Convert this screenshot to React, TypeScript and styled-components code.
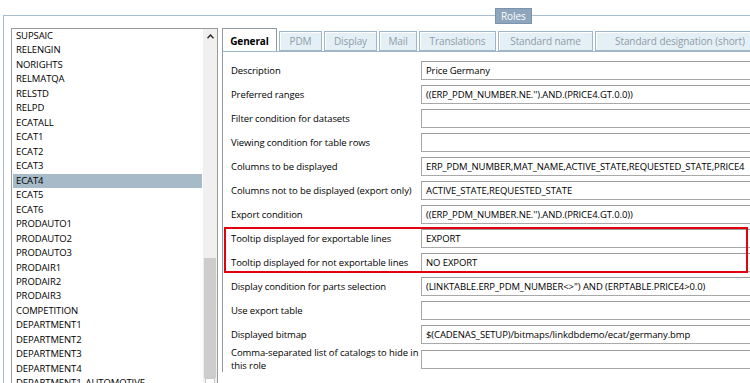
import { styled, createGlobalStyle } from 'styled-components';

const GlobalStyle = createGlobalStyle`
  html, body {
    margin: 0;
    padding: 0;
    background: #ffffff;
    overflow: hidden;
  }

  body {
    font-family: 'Open Sans', 'Noto Sans', sans-serif;
    font-size: 9.5px;
    font-weight: 500;
    letter-spacing: -0.1px;
    color: #000000;
  }
`;

const ROLES = [
  'SUPSAIC',
  'RELENGIN',
  'NORIGHTS',
  'RELMATQA',
  'RELSTD',
  'RELPD',
  'ECATALL',
  'ECAT1',
  'ECAT2',
  'ECAT3',
  'ECAT4',
  'ECAT5',
  'ECAT6',
  'PRODAUTO1',
  'PRODAUTO2',
  'PRODAUTO3',
  'PRODAIR1',
  'PRODAIR2',
  'PRODAIR3',
  'COMPETITION',
  'DEPARTMENT1',
  'DEPARTMENT2',
  'DEPARTMENT3',
  'DEPARTMENT4',
  'DEPARTMENT1_AUTOMOTIVE',
];

const TABS = [
  { label: 'General', width: 55 },
  { label: 'PDM', width: 43 },
  { label: 'Display', width: 53 },
  { label: 'Mail', width: 38 },
  { label: 'Translations', width: 77 },
  { label: 'Standard name', width: 95 },
  { label: 'Standard designation (short)', width: 170 },
];

const FIELDS = [
  { label: 'Description', value: 'Price Germany' },
  { label: 'Preferred ranges', value: "((ERP_PDM_NUMBER.NE.'').AND.(PRICE4.GT.0.0))" },
  { label: 'Filter condition for datasets', value: '' },
  { label: 'Viewing condition for table rows', value: '' },
  {
    label: 'Columns to be displayed',
    value: 'ERP_PDM_NUMBER,MAT_NAME,ACTIVE_STATE,REQUESTED_STATE,PRICE4',
  },
  { label: 'Columns not to be displayed (export only)', value: 'ACTIVE_STATE,REQUESTED_STATE' },
  { label: 'Export condition', value: "((ERP_PDM_NUMBER.NE.'').AND.(PRICE4.GT.0.0))" },
  { label: 'Tooltip displayed for exportable lines', value: 'EXPORT' },
  { label: 'Tooltip displayed for not exportable lines', value: 'NO EXPORT' },
  {
    label: 'Display condition for parts selection',
    value: "(LINKTABLE.ERP_PDM_NUMBER<>'') AND (ERPTABLE.PRICE4>0.0)",
  },
  { label: 'Use export table', value: '' },
  { label: 'Displayed bitmap', value: '$(CADENAS_SETUP)/bitmaps/linkdbdemo/ecat/germany.bmp' },
  { label: 'Comma-separated list of catalogs to hide in this role', value: '' },
];

const App = () => {
  return (
    <>
      <GlobalStyle />
      <Screen>
        <GroupBox>
          <Legend>Roles</Legend>

          <ListBox>
            <Items>
              {ROLES.map((role) => (
                <Item key={role} $selected={role === 'ECAT4'}>
                  {role}
                </Item>
              ))}
            </Items>
            <ScrollBar>
              <ArrowButton>
                <svg width="7" height="5" viewBox="0 0 7 5">
                  <path d="M0.5 4.2 L3.5 1 L6.5 4.2" fill="none" stroke="#222" strokeWidth="1.3" />
                </svg>
              </ArrowButton>
              <Track />
              <Thumb />
              <BottomButton />
            </ScrollBar>
          </ListBox>

          <TabControl>
            <TabStrip>
              {TABS.map((tab, index) => (
                <Tab key={tab.label} $active={index === 0} $width={tab.width}>
                  {tab.label}
                </Tab>
              ))}
            </TabStrip>

            <Panel>
              {FIELDS.map((field) => (
                <Row key={field.label}>
                  <Label>{field.label}</Label>
                  <Input>{field.value}</Input>
                </Row>
              ))}
              <Highlight />
            </Panel>
          </TabControl>
        </GroupBox>
      </Screen>
    </>
  );
};

const Screen = styled.div`
  position: relative;

  width: 750px;
  height: 383px;
  overflow: hidden;

  background: #ffffff;
`;

const GroupBox = styled.div`
  position: relative;
  display: flex;
  align-items: flex-start;

  height: 400px;
  margin: 15px 0 0 3px;
  padding: 12px 0 0 7px;

  border-top: 1px solid #a9bdd0;
  border-left: 1px solid #a9bdd0;
`;

const Legend = styled.span`
  position: absolute;
  top: -8px;
  left: 491px;

  height: 14px;
  padding: 0 5px;

  background: #8da6bd;
  border: 1px solid #7b93aa;

  color: #ffffff;
  font-size: 10px;
  line-height: 14px;
`;

const ListBox = styled.div`
  display: flex;
  flex-shrink: 0;

  width: 207px;
  height: 380px;

  border: 1px solid #9a9a9a;
  box-sizing: border-box;
  background: #ffffff;
`;

const Items = styled.ul`
  flex: 1;

  margin: 0;
  padding: 0 1px;

  list-style: none;
`;

const Item = styled.li<{ $selected?: boolean }>`
  height: 14.47px;
  padding-left: 3px;

  background: ${({ $selected }) => ($selected ? '#a6bac8' : 'transparent')};

  font-size: 9.5px;
  line-height: 14.47px;
  white-space: nowrap;
`;

const ScrollBar = styled.div`
  display: flex;
  flex-direction: column;

  width: 14px;

  background: #f0f0f0;
`;

const ArrowButton = styled.div`
  display: flex;
  align-items: center;
  justify-content: center;

  height: 14px;
`;

const Track = styled.div`
  height: 215px;
`;

const Thumb = styled.div`
  height: 120px;
  margin: 0 1px;

  background: #cdcdcd;
`;

const BottomButton = styled.div`
  height: 12px;
  margin: 0 2px;

  background: #ffffff;
  border: 1px solid #c8c8c8;
`;

const TabControl = styled.div`
  display: flex;
  flex-direction: column;

  flex: 1;
  min-width: 0;
  margin-left: 4px;
  overflow: hidden;
`;

const TabStrip = styled.div`
  display: flex;
  align-items: flex-end;
  gap: 2px;

  height: 23px;
`;

const Tab = styled.div<{ $active?: boolean; $width: number }>`
  display: flex;
  align-items: center;
  justify-content: center;
  flex-shrink: 0;

  width: ${({ $width }) => $width}px;
  height: ${({ $active }) => ($active ? '24px' : '20px')};
  margin-bottom: ${({ $active }) => ($active ? '-1px' : '0')};

  background: ${({ $active }) => ($active ? '#ffffff' : '#e4f0f6')};
  border: 1px solid ${({ $active }) => ($active ? '#8e9aa6' : '#9fb6ca')};
  border-bottom: ${({ $active }) => ($active ? 'none' : '1px solid #9fb6ca')};
  box-shadow: ${({ $active }) => ($active ? 'none' : 'inset 1px 1px 0 #ffffff')};
  box-sizing: border-box;

  color: ${({ $active }) => ($active ? '#000000' : '#8f9ca8')};
  font-size: 10px;
  font-weight: ${({ $active }) => ($active ? 700 : 400)};
  white-space: nowrap;
`;

const Panel = styled.div`
  position: relative;

  display: flex;
  flex-direction: column;

  padding: 6px 0 0 8px;

  border-left: 1px solid #8e9aa6;
  border-top: 1px solid #9fb6ca;
`;

const Row = styled.div`
  display: grid;
  grid-template-columns: 190px 1fr;
  align-items: center;

  min-height: 24px;
`;

const Label = styled.span`
  font-size: 9.5px;
  line-height: 13px;
`;

const Input = styled.div`
  height: 19px;
  padding-left: 4px;

  border: 1px solid #a9a9a9;
  border-top-color: #9c9c9c;
  border-right: none;
  box-sizing: border-box;

  font-size: 9.5px;
  line-height: 17px;
  white-space: nowrap;
  overflow: hidden;
`;

const Highlight = styled.div`
  position: absolute;
  top: 175px;
  left: 1px;

  width: 524px;
  height: 46px;

  border: 2px solid #e3000f;
  box-sizing: border-box;
  pointer-events: none;
`;

export default App;
